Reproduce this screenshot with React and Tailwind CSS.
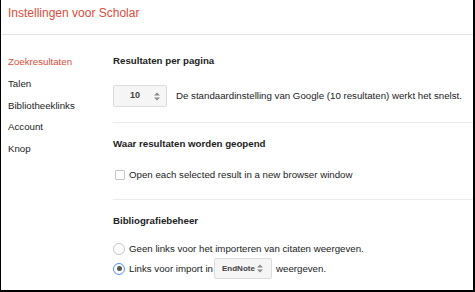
import React from 'react';

const Arrows = () => (
  <svg width="6" height="9" viewBox="0 0 6 9" className="shrink-0">
    <path d="M0 3.5 L3 0.5 L6 3.5 Z" fill="#8a8a8a" />
    <path d="M0 5.5 L3 8.5 L6 5.5 Z" fill="#8a8a8a" />
  </svg>
);

const Radio = ({ checked }) => (
  <span
    className={
      checked
        ? 'w-[12px] h-[12px] rounded-full border border-[#4d90fe] bg-white flex items-center justify-center shrink-0'
        : 'w-[12px] h-[12px] rounded-full border border-[#c6c6c6] bg-white shrink-0'
    }
  >
    {checked && <span className="w-[5px] h-[5px] rounded-full bg-[#555]" />}
  </span>
);

const navItems = ['Zoekresultaten', 'Talen', 'Bibliotheeklinks', 'Account', 'Knop'];

export default function App() {
  return (
    <div className="w-[475px] h-[292px] bg-white border-l border-r-2 border-b-2 border-black font-['Liberation_Sans',Arial,sans-serif] text-[#222] overflow-hidden">
      {/* header */}
      <div className="h-[35px] border-b border-[#e5e5e5] pl-[7px] pt-[6px]">
        <div className="text-[12px] leading-[14px] text-[#dd4b39]">Instellingen voor Scholar</div>
      </div>

      <div className="flex">
        {/* sidebar */}
        <div className="w-[112px] pl-[7px] pt-[16px] shrink-0">
          {navItems.map((item, i) => (
            <div
              key={item}
              className={i === 0 ? 'h-[21.75px] leading-[21.75px] text-[9.7px] text-[#dd4b39]' : 'h-[21.75px] leading-[21.75px] text-[9.7px] text-[#222]'}
            >
              {item}
            </div>
          ))}
        </div>

        {/* main */}
        <div className="flex-1">
          <div className="pt-[20px] pb-[15px] border-b border-[#ebebeb]">
            <div className="text-[9.7px] leading-[12px] font-bold">Resultaten per pagina</div>
            <div className="mt-[18px] flex items-center">
              <div className="w-[54px] h-[22px] bg-[#f5f5f5] border border-[#dcdcdc] rounded-[2px] flex items-center pl-[16px] pr-[6px] justify-between">
                <span className="text-[9px] font-bold text-[#444]">10</span>
                <Arrows />
              </div>
              <span className="ml-[9px] text-[9.7px] leading-[12px]">
                De standaardinstelling van Google (10 resultaten) werkt het snelst.
              </span>
            </div>
          </div>

          <div className="pt-[15px] pb-[18px] border-b border-[#ebebeb]">
            <div className="text-[9.7px] leading-[12px] font-bold">Waar resultaten worden geopend</div>
            <div className="mt-[19px] flex items-center h-[12px]">
              <span className="ml-[2px] w-[10px] h-[10px] border border-[#c6c6c6] rounded-[1px] bg-white shrink-0" />
              <span className="ml-[4px] text-[9.7px] leading-[12px]">Open each selected result in a new browser window</span>
            </div>
          </div>

          <div className="pt-[15px]">
            <div className="text-[9.7px] leading-[12px] font-bold">Bibliografiebeheer</div>
            <div className="mt-[15px] flex items-center h-[14px]">
              <Radio />
              <span className="ml-[4px] text-[9.7px] leading-[12px]">
                Geen links voor het importeren van citaten weergeven.
              </span>
            </div>
            <div className="mt-[2px] flex items-center h-[21px]">
              <Radio checked />
              <span className="ml-[4px] text-[9.7px] leading-[12px]">Links voor import in</span>
              <div className="ml-[1px] w-[58px] h-[21px] bg-[#f5f5f5] border border-[#dcdcdc] rounded-[2px] flex items-center pl-[7px] pr-[8px] justify-between">
                <span className="text-[8px] font-bold text-[#444]">EndNote</span>
                <Arrows />
              </div>
              <span className="ml-[4px] text-[9.7px] leading-[12px]">weergeven.</span>
            </div>
          </div>
        </div>
      </div>
    </div>
  );
}
